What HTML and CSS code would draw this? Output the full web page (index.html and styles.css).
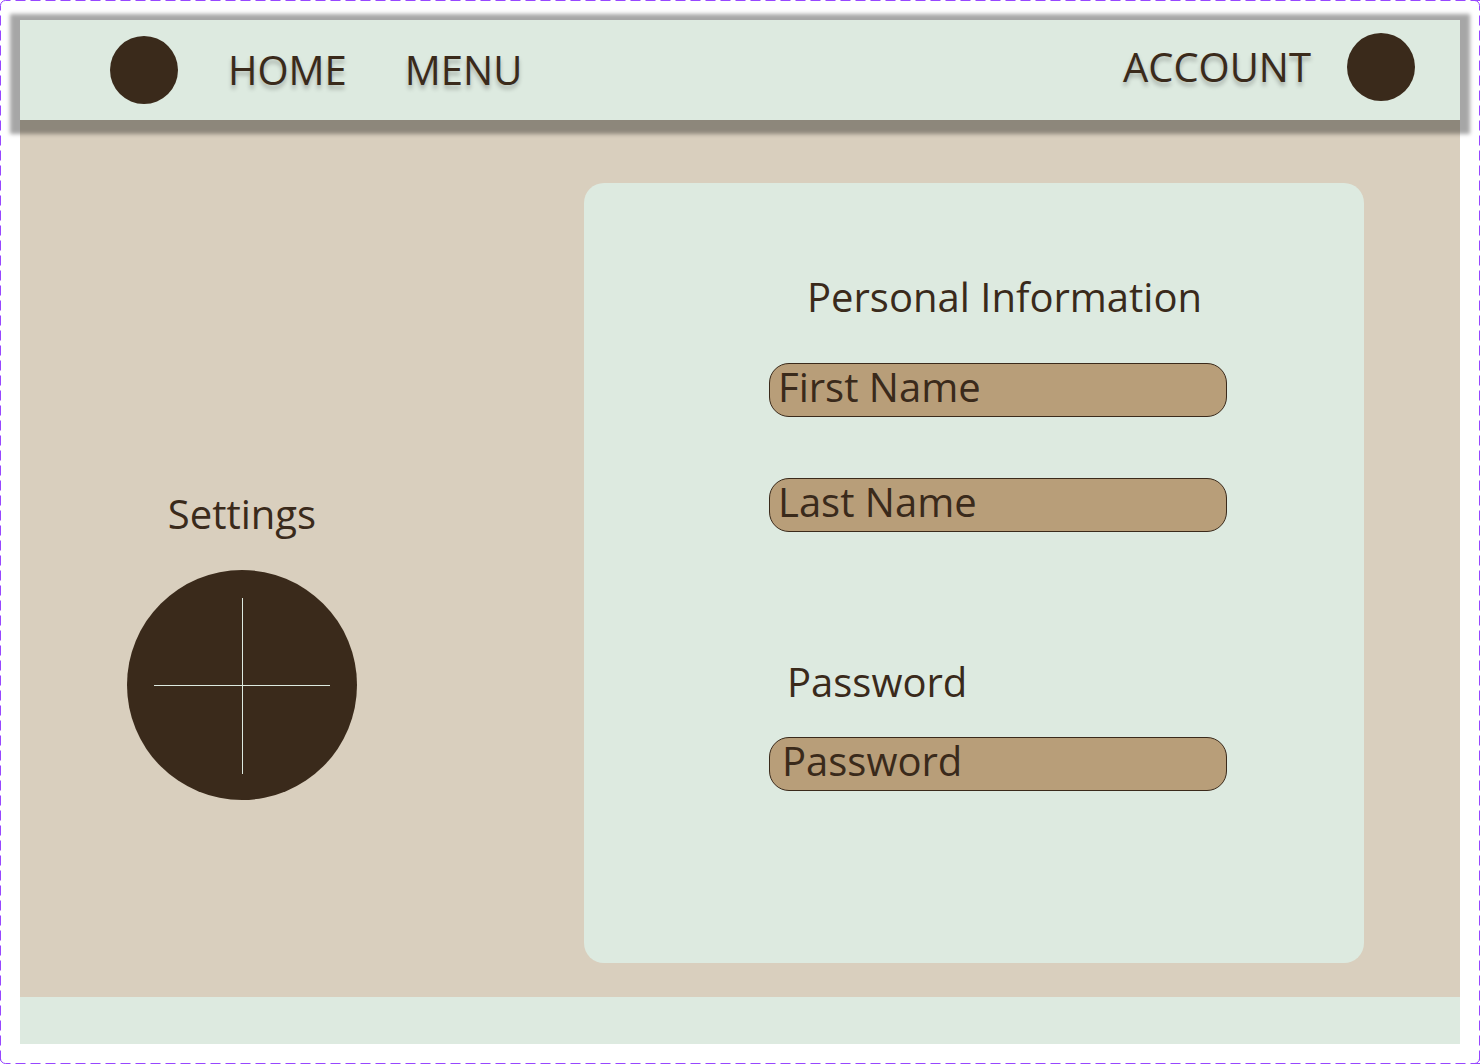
FILE: index.html
```html
<!DOCTYPE html>
<html lang="en">
<head>
<meta charset="utf-8">
<meta name="viewport" content="width=device-width, initial-scale=1">
<title>Account settings</title>
<link rel="stylesheet" href="styles.css">
</head>
<body>
<div class="page">
  <svg class="outline" aria-hidden="true">
    <line x1="5" y1="0" x2="100%" y2="0" stroke-dashoffset="5"/>
    <line x1="0" y1="5" x2="0" y2="100%" stroke-dashoffset="5"/>
    <svg y="100%"><line x1="5" y1="-1" x2="100%" y2="-1" stroke-dashoffset="5"/></svg>
    <svg x="100%"><line x1="-1" y1="5" x2="-1" y2="100%" stroke-dashoffset="5"/></svg>
    <path class="corner" d="M.5 5.5a5 5 0 0 1 5-5"/>
    <svg x="100%"><path class="corner" d="M-5.500 .5a5 5 0 0 1 5 5"/></svg>
    <svg y="100%"><path class="corner" d="M.5-5.500a5 5 0 0 0 5 5"/></svg>
    <svg x="100%" y="100%"><path class="corner" d="M-.5-5.500a5 5 0 0 1-5 5"/></svg>
  </svg>
  <header class="topbar">
    <nav class="nav">
      <span class="dot"></span>
      <a class="link" href="#">HOME</a>
      <a class="link" href="#">MENU</a>
    </nav>
    <div class="account">
      <a class="link" href="#">ACCOUNT</a>
      <span class="dot"></span>
    </div>
  </header>
  <main class="content">
    <section class="settings">
      <h1 class="title">Settings</h1>
      <button class="add" type="button" aria-label="Add">
        <svg class="plus" viewBox="0 0 176 178" aria-hidden="true"><path d="M88 2h1v176h-1zM0 89h176v1H0z"/></svg>
      </button>
    </section>
    <form class="card">
      <h2 class="title title-personal">Personal Information</h2>
      <input class="field" type="text" placeholder="First Name" aria-label="First Name">
      <input class="field" type="text" placeholder="Last Name" aria-label="Last Name">
      <h2 class="title title-password">Password</h2>
      <input class="field field-password" type="password" placeholder="Password" aria-label="Password">
    </form>
  </main>
  <footer class="footer"></footer>
</div>
</body>
</html>
```
FILE: styles.css
```css
* {
  box-sizing: border-box;
}

body {
  margin: 0;
  background: #fff;
  color: #3a2a1b;
  font: 400 40px/50px "Open Sans", "Noto Sans", sans-serif;
}

.page {
  position: relative;
  display: flex;
  flex-direction: column;
  min-height: 100vh;
  padding: 20px;
}

.outline {
  position: absolute;
  inset: 0;
  width: 100%;
  height: 100%;
  pointer-events: none;
}

.outline svg {
  overflow: visible;
}

.outline line {
  stroke: #9747ff;
  stroke-width: 1;
  stroke-dasharray: 10 5;
  transform: translate(0.5px, 0.5px);
}

.corner {
  fill: none;
  stroke: #9747ff;
}

.topbar {
  position: relative;
  display: flex;
  justify-content: space-between;
  height: 100px;
  padding: 0 45px 0 90px;
  background: #ddeae0;
  box-shadow: 0 4px 4px 10px rgba(0, 0, 0, 0.35);
}

.nav,
.account {
  display: flex;
  align-items: center;
}

.nav {
  gap: 58px;
}

.nav .dot {
  margin-right: -8px;
}

.account {
  gap: 36px;
  padding-bottom: 6px;
}

.dot {
  width: 68px;
  height: 68px;
  border-radius: 50%;
  background: #3a2a1b;
}

.link {
  color: inherit;
  text-decoration: none;
  text-shadow: 0 4px 4px rgba(0, 0, 0, 0.25);
}

.content {
  flex: 1;
  display: flex;
  align-items: flex-start;
  justify-content: space-between;
  padding: 63px 96px 34px 107px;
  background: #d9cfbe;
}

.settings {
  display: flex;
  flex-direction: column;
  align-items: center;
  gap: 31px;
  padding-top: 306px;
}

.title {
  margin: 0;
  font-size: 40px;
  font-weight: 400;
}

.add {
  display: grid;
  place-items: center;
  width: 230px;
  height: 230px;
  padding: 0;
  border: 0;
  border-radius: 50%;
  background: #3a2a1b;
}

.plus {
  width: 176px;
  height: 178px;
  fill: #ddeae0;
}

.card {
  flex: 0 1 780px;
  display: flex;
  flex-direction: column;
  min-height: 780px;
  padding: 89px 137px 89px 185px;
  border-radius: 20px;
  background: #ddeae0;
}

.title-personal {
  padding-left: 38px;
  margin-bottom: 41px;
}

.title-password {
  padding-left: 18px;
  margin: 125px 0 30px;
}

.field {
  width: 100%;
  height: 54px;
  padding: 0 8px 8px;
  border: 1px solid #3a2a1b;
  border-radius: 20px;
  background: #b89e79;
  color: inherit;
  font: inherit;
}

.field + .field {
  margin-top: 61px;
}

.field::placeholder {
  color: inherit;
  opacity: 1;
}

.field-password {
  padding-left: 12px;
}

.footer {
  height: 47px;
  background: #ddeae0;
}
```
